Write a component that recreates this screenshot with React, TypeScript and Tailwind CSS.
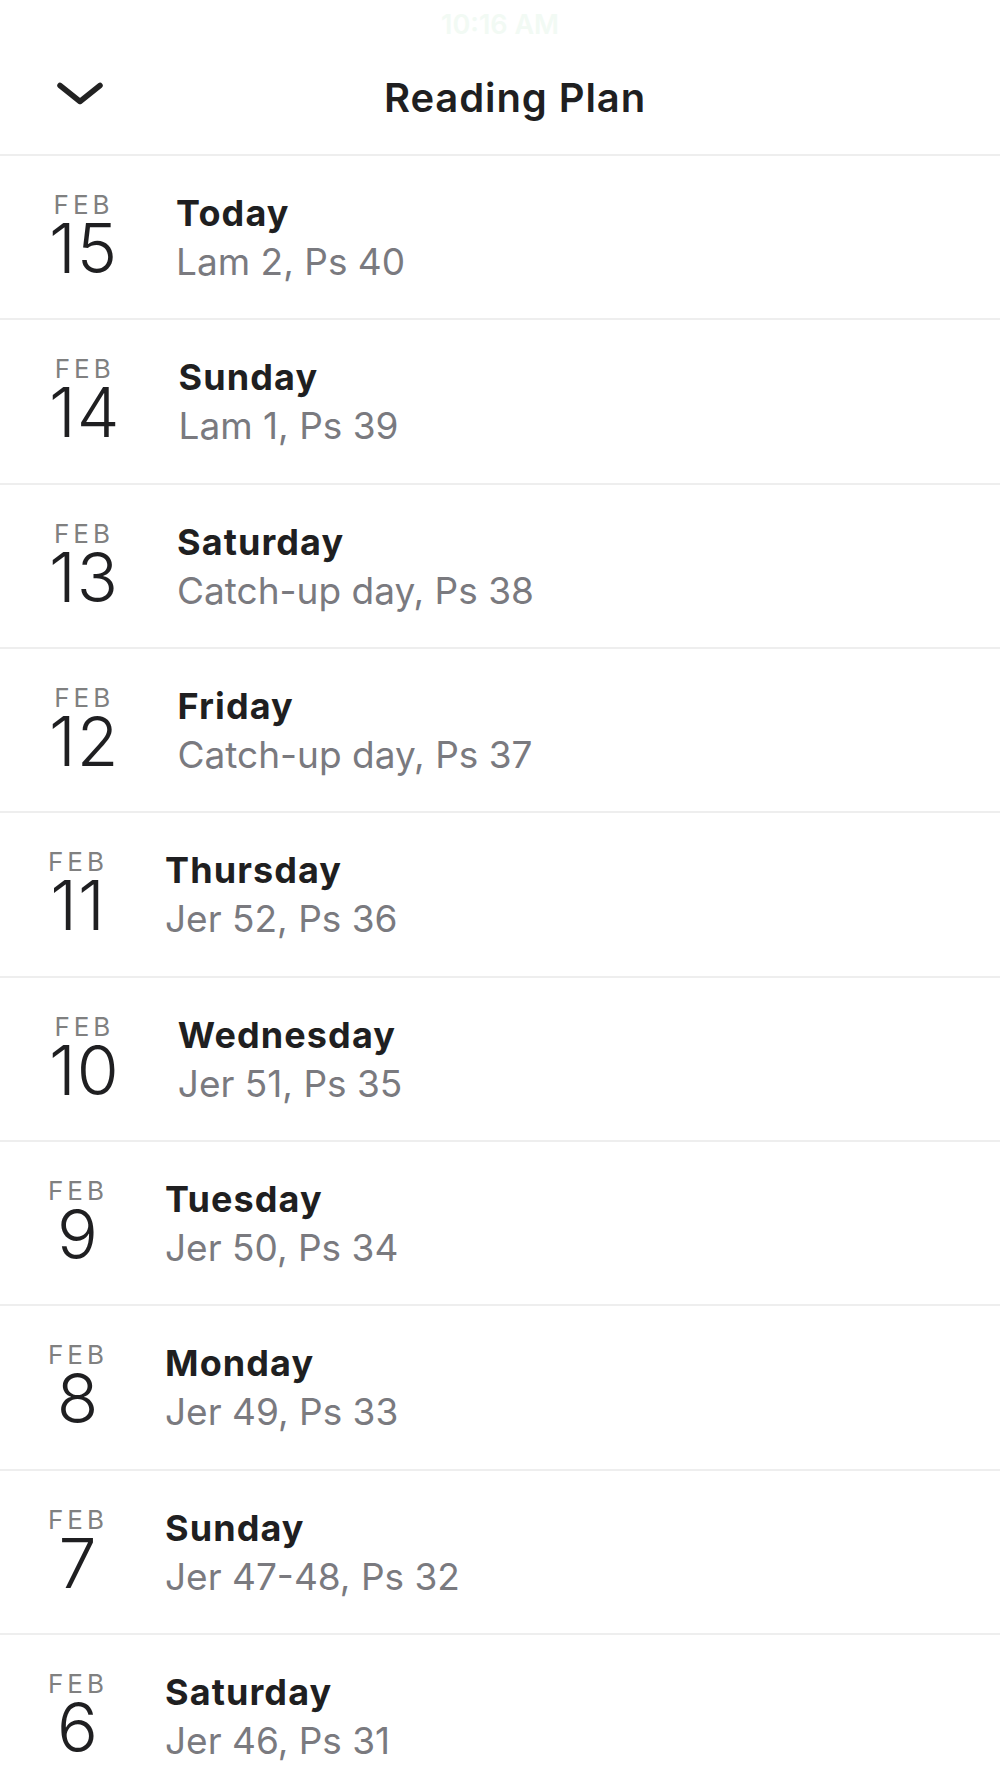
import React from "react";

const rows = [
  { d: "15", day: "Today", r: "Lam 2, Ps 40" },
  { d: "14", day: "Sunday", r: "Lam 1, Ps 39" },
  { d: "13", day: "Saturday", r: "Catch-up day, Ps 38" },
  { d: "12", day: "Friday", r: "Catch-up day, Ps 37" },
  { d: "11", day: "Thursday", r: "Jer 52, Ps 36" },
  { d: "10", day: "Wednesday", r: "Jer 51, Ps 35" },
  { d: "9", day: "Tuesday", r: "Jer 50, Ps 34" },
  { d: "8", day: "Monday", r: "Jer 49, Ps 33" },
  { d: "7", day: "Sunday", r: "Jer 47-48, Ps 32" },
  { d: "6", day: "Saturday", r: "Jer 46, Ps 31" },
];

export default function App() {
  return (
    <div className="w-[1000px] bg-white font-['Inter',sans-serif] text-[#1f1f21]">
      <header className="h-[156px] border-b-2 border-[#eeeeee] pb-[9px]">
        <div className="h-[50px] flex items-center justify-center text-[27px] font-semibold text-[#f2faf4]">
          10:16 AM
        </div>
        <div className="h-[95px] flex">
          <div className="w-[130px] h-[95px]">
            <svg width="130" height="95" viewBox="0 0 130 95" fill="none">
              <path d="M60 35.5 L80 51.5 L100 35.5" stroke="#222" strokeWidth="5.5" strokeLinecap="round" strokeLinejoin="round" />
            </svg>
          </div>
          <div className="flex-1 pr-[100px] flex items-center justify-center">
            <span className="text-[40px] font-semibold tracking-[0.9px] leading-none">Reading Plan</span>
          </div>
        </div>
      </header>
      {rows.map((row) => (
        <div key={row.d} className="h-[164.33px] border-b-2 border-[#eeeeee] flex items-center pl-[48px]">
          <div className="flex flex-col items-center">
            <span className="text-[26px] leading-none tracking-[4px] mr-[-1px] text-[#808080]">FEB</span>
            <span className="text-[68px] leading-none font-light tracking-[1px] pl-[1px] mt-[-4px]">{row.d}</span>
          </div>
          <div className="ml-[58px] flex flex-col mt-[1px]">
            <span className="text-[36px] leading-none font-bold tracking-[1.1px]">{row.day}</span>
            <span className="text-[37px] leading-none text-[#7a7a7f] mt-[12px]">{row.r}</span>
          </div>
        </div>
      ))}
    </div>
  );
}
